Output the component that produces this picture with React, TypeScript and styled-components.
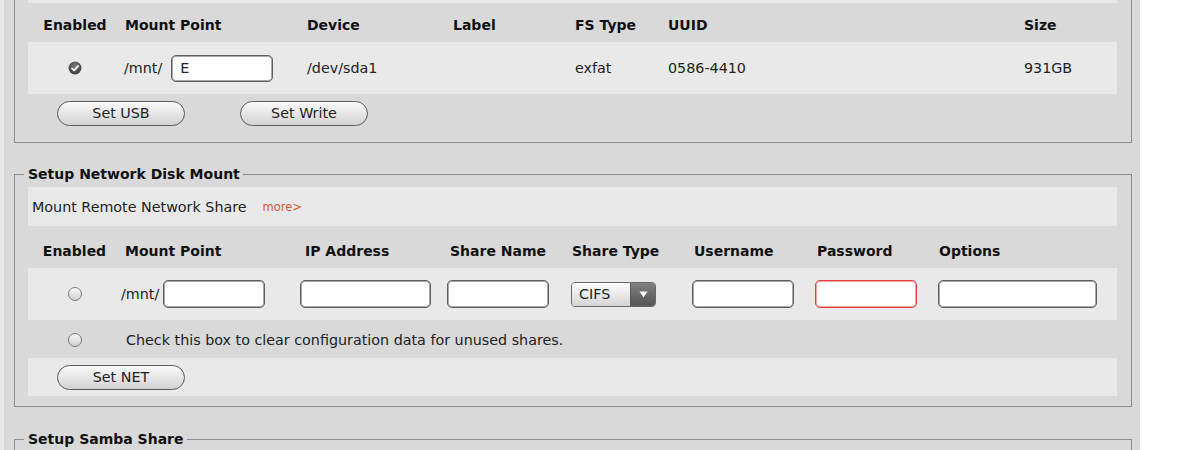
import React from 'react';
import styled, { createGlobalStyle } from 'styled-components';

const GlobalStyle = createGlobalStyle`
  html, body {
    margin: 0;
    padding: 0;
    background: #ffffff;
    overflow: hidden;
  }
  body {
    font-family: "DejaVu Sans", Verdana, sans-serif;
    color: #222;
  }
`;

const Page = styled.div`
  box-sizing: border-box;
  width: 1140px;
  min-height: 520px;
  margin-top: -42px;
  padding: 0 8px 0 10px;
  background: #d9d9d9;
  border-left: 4px solid #e9e9e9;
  display: flow-root;
`;

const Fieldset = styled.fieldset<{ $gap?: number }>`
  margin: ${(p) => p.$gap ?? 0}px 0 0;
  padding: 5px 14px 10px 13px;
  border: 1px solid #8c8c8c;
  min-width: 0;
`;

const Legend = styled.legend`
  margin-left: -4px;
  padding: 0 3px 0 4px;
  font-size: 14px;
  line-height: 16px;
  font-weight: bold;
  color: #111;
`;

const InfoRow = styled.div`
  height: 39px;
  display: flex;
  align-items: center;
  padding-left: 4px;
  background: #e9e9e9;
  font-size: 14.3px;
  color: #222;
`;

const More = styled.span`
  margin-left: 16px;
  font-size: 11.5px;
  color: #df5430;
`;

const Row = styled.div<{ $cols: string; $h: number; $light?: boolean; $top?: number }>`
  display: grid;
  grid-template-columns: ${(p) => p.$cols};
  height: ${(p) => p.$h}px;
  box-sizing: border-box;
  padding-top: ${(p) => p.$top ?? 0}px;
  align-items: center;
  background: ${(p) => (p.$light ? '#e9e9e9' : 'transparent')};
`;

const Head = styled.div<{ $pad?: number; $center?: boolean }>`
  padding-left: ${(p) => p.$pad ?? 0}px;
  text-align: ${(p) => (p.$center ? 'center' : 'left')};
  font-size: 14px;
  font-weight: bold;
  color: #111;
  white-space: nowrap;
`;

const Cell = styled.div<{ $pad?: number; $center?: boolean; $span?: number }>`
  display: flex;
  align-items: center;
  justify-content: ${(p) => (p.$center ? 'center' : 'flex-start')};
  padding-left: ${(p) => p.$pad ?? 0}px;
  grid-column: ${(p) => (p.$span ? `span ${p.$span}` : 'auto')};
  font-size: 14.3px;
  color: #222;
  white-space: nowrap;
`;

const TextInput = styled.input<{ $w: number; $h?: number; $ml?: number; $error?: boolean }>`
  box-sizing: border-box;
  width: ${(p) => p.$w}px;
  height: ${(p) => p.$h ?? 28}px;
  margin: 0 0 0 ${(p) => p.$ml ?? 0}px;
  padding: 0 8px;
  font-family: "DejaVu Sans", Verdana, sans-serif;
  font-size: 14.3px;
  color: #222;
  background: #fff;
  border: 1px solid ${(p) => (p.$error ? '#e0403c' : '#5e5e5e')};
  box-shadow: inset 0 0 0 1px ${(p) => (p.$error ? '#f3a3a0' : '#a8a8a8')};
  border-radius: 5px;
  outline: none;
`;

const Select = styled.div`
  box-sizing: border-box;
  display: inline-flex;
  width: 85px;
  height: 25px;
  border: 1px solid #6a6a6a;
  border-radius: 4px;
  overflow: hidden;
`;

const SelectText = styled.span`
  flex: 1;
  padding-left: 7px;
  line-height: 23px;
  font-size: 14.3px;
  color: #222;
  background: linear-gradient(#fdfdfd, #d4d4d4);
`;

const SelectArrow = styled.span`
  width: 24px;
  display: flex;
  align-items: center;
  justify-content: center;
  background: linear-gradient(#808080, #555);
  border-left: 1px solid #5a5a5a;
`;

const ButtonRow = styled.div<{ $light?: boolean }>`
  height: 38px;
  display: flex;
  align-items: center;
  gap: 55px;
  padding-left: 29px;
  background: ${(p) => (p.$light ? '#e9e9e9' : 'transparent')};
`;

const PillButton = styled.button`
  box-sizing: border-box;
  width: 128px;
  height: 25px;
  padding: 0;
  border: 1px solid #5c5c5c;
  border-radius: 13px;
  background: linear-gradient(#fbfbfb, #e6e6e6 50%, #d2d2d2);
  font-family: "DejaVu Sans", Verdana, sans-serif;
  font-size: 14.3px;
  color: #222;
`;

const Radio = styled.span`
  box-sizing: border-box;
  display: inline-block;
  width: 14px;
  height: 14px;
  border-radius: 50%;
  border: 1px solid #7a7a7a;
  background: linear-gradient(#fbfbfb, #cfcfcf);
`;

const CheckedMark = () => (
  <svg width="14" height="14" viewBox="0 0 14 14" aria-label="enabled">
    <defs>
      <radialGradient id="chk" cx="50%" cy="35%" r="70%">
        <stop offset="0" stopColor="#7a7a7a" />
        <stop offset="1" stopColor="#363636" />
      </radialGradient>
    </defs>
    <circle cx="7" cy="7" r="6.5" fill="url(#chk)" />
    <path d="M4 7.3 L6.1 9.4 L10.1 4.9" stroke="#fff" strokeWidth="1.7" fill="none" strokeLinecap="round" strokeLinejoin="round" />
  </svg>
);

const DownTriangle = () => (
  <svg width="9" height="7" viewBox="0 0 9 7">
    <path d="M0.5 0.5 H8.5 L4.5 6.5 Z" fill="#fff" />
  </svg>
);

const USB_COLS = '94px 185px 146px 122px 93px 356px 1fr';
const NET_COLS = '93px 179px 147px 124px 121px 123px 123px 1fr';

export default function App() {
  return (
    <>
      <GlobalStyle />
      <Page>
        <Fieldset>
          <InfoRow />
          <Row $cols={USB_COLS} $h={39} $top={5}>
            <Head $center>Enabled</Head>
            <Head $pad={3}>Mount Point</Head>
            <Head>Device</Head>
            <Head>Label</Head>
            <Head>FS Type</Head>
            <Head>UUID</Head>
            <Head>Size</Head>
          </Row>
          <Row $cols={USB_COLS} $h={52} $light>
            <Cell $center>
              <CheckedMark />
            </Cell>
            <Cell $pad={2}>
              /mnt/
              <TextInput $w={102} $h={27} $ml={9} defaultValue="E" />
            </Cell>
            <Cell>/dev/sda1</Cell>
            <Cell></Cell>
            <Cell>exfat</Cell>
            <Cell>0586-4410</Cell>
            <Cell>931GB</Cell>
          </Row>
          <ButtonRow>
            <PillButton>Set USB</PillButton>
            <PillButton>Set Write</PillButton>
          </ButtonRow>
        </Fieldset>

        <Fieldset $gap={23}>
          <Legend>Setup Network Disk Mount</Legend>
          <InfoRow>
            Mount Remote Network Share<More>more&gt;</More>
          </InfoRow>
          <Row $cols={NET_COLS} $h={42} $top={8}>
            <Head $center>Enabled</Head>
            <Head $pad={4}>Mount Point</Head>
            <Head $pad={5}>IP Address</Head>
            <Head $pad={3}>Share Name</Head>
            <Head $pad={1}>Share Type</Head>
            <Head $pad={2}>Username</Head>
            <Head $pad={2}>Password</Head>
            <Head $pad={1}>Options</Head>
          </Row>
          <Row $cols={NET_COLS} $h={52} $light>
            <Cell $center>
              <Radio />
            </Cell>
            <Cell>
              /mnt/
              <TextInput $w={102} $ml={4} />
            </Cell>
            <Cell>
              <TextInput $w={131} />
            </Cell>
            <Cell>
              <TextInput $w={102} />
            </Cell>
            <Cell>
              <Select>
                <SelectText>CIFS</SelectText>
                <SelectArrow>
                  <DownTriangle />
                </SelectArrow>
              </Select>
            </Cell>
            <Cell>
              <TextInput $w={102} />
            </Cell>
            <Cell>
              <TextInput $w={102} $error type="password" />
            </Cell>
            <Cell>
              <TextInput $w={159} />
            </Cell>
          </Row>
          <Row $cols={NET_COLS} $h={38} $top={2}>
            <Cell $center>
              <Radio />
            </Cell>
            <Cell $pad={5} $span={7}>
              Check this box to clear configuration data for unused shares.
            </Cell>
          </Row>
          <ButtonRow $light>
            <PillButton>Set NET</PillButton>
          </ButtonRow>
        </Fieldset>

        <Fieldset $gap={24}>
          <Legend>Setup Samba Share</Legend>
        </Fieldset>
      </Page>
    </>
  );
}
